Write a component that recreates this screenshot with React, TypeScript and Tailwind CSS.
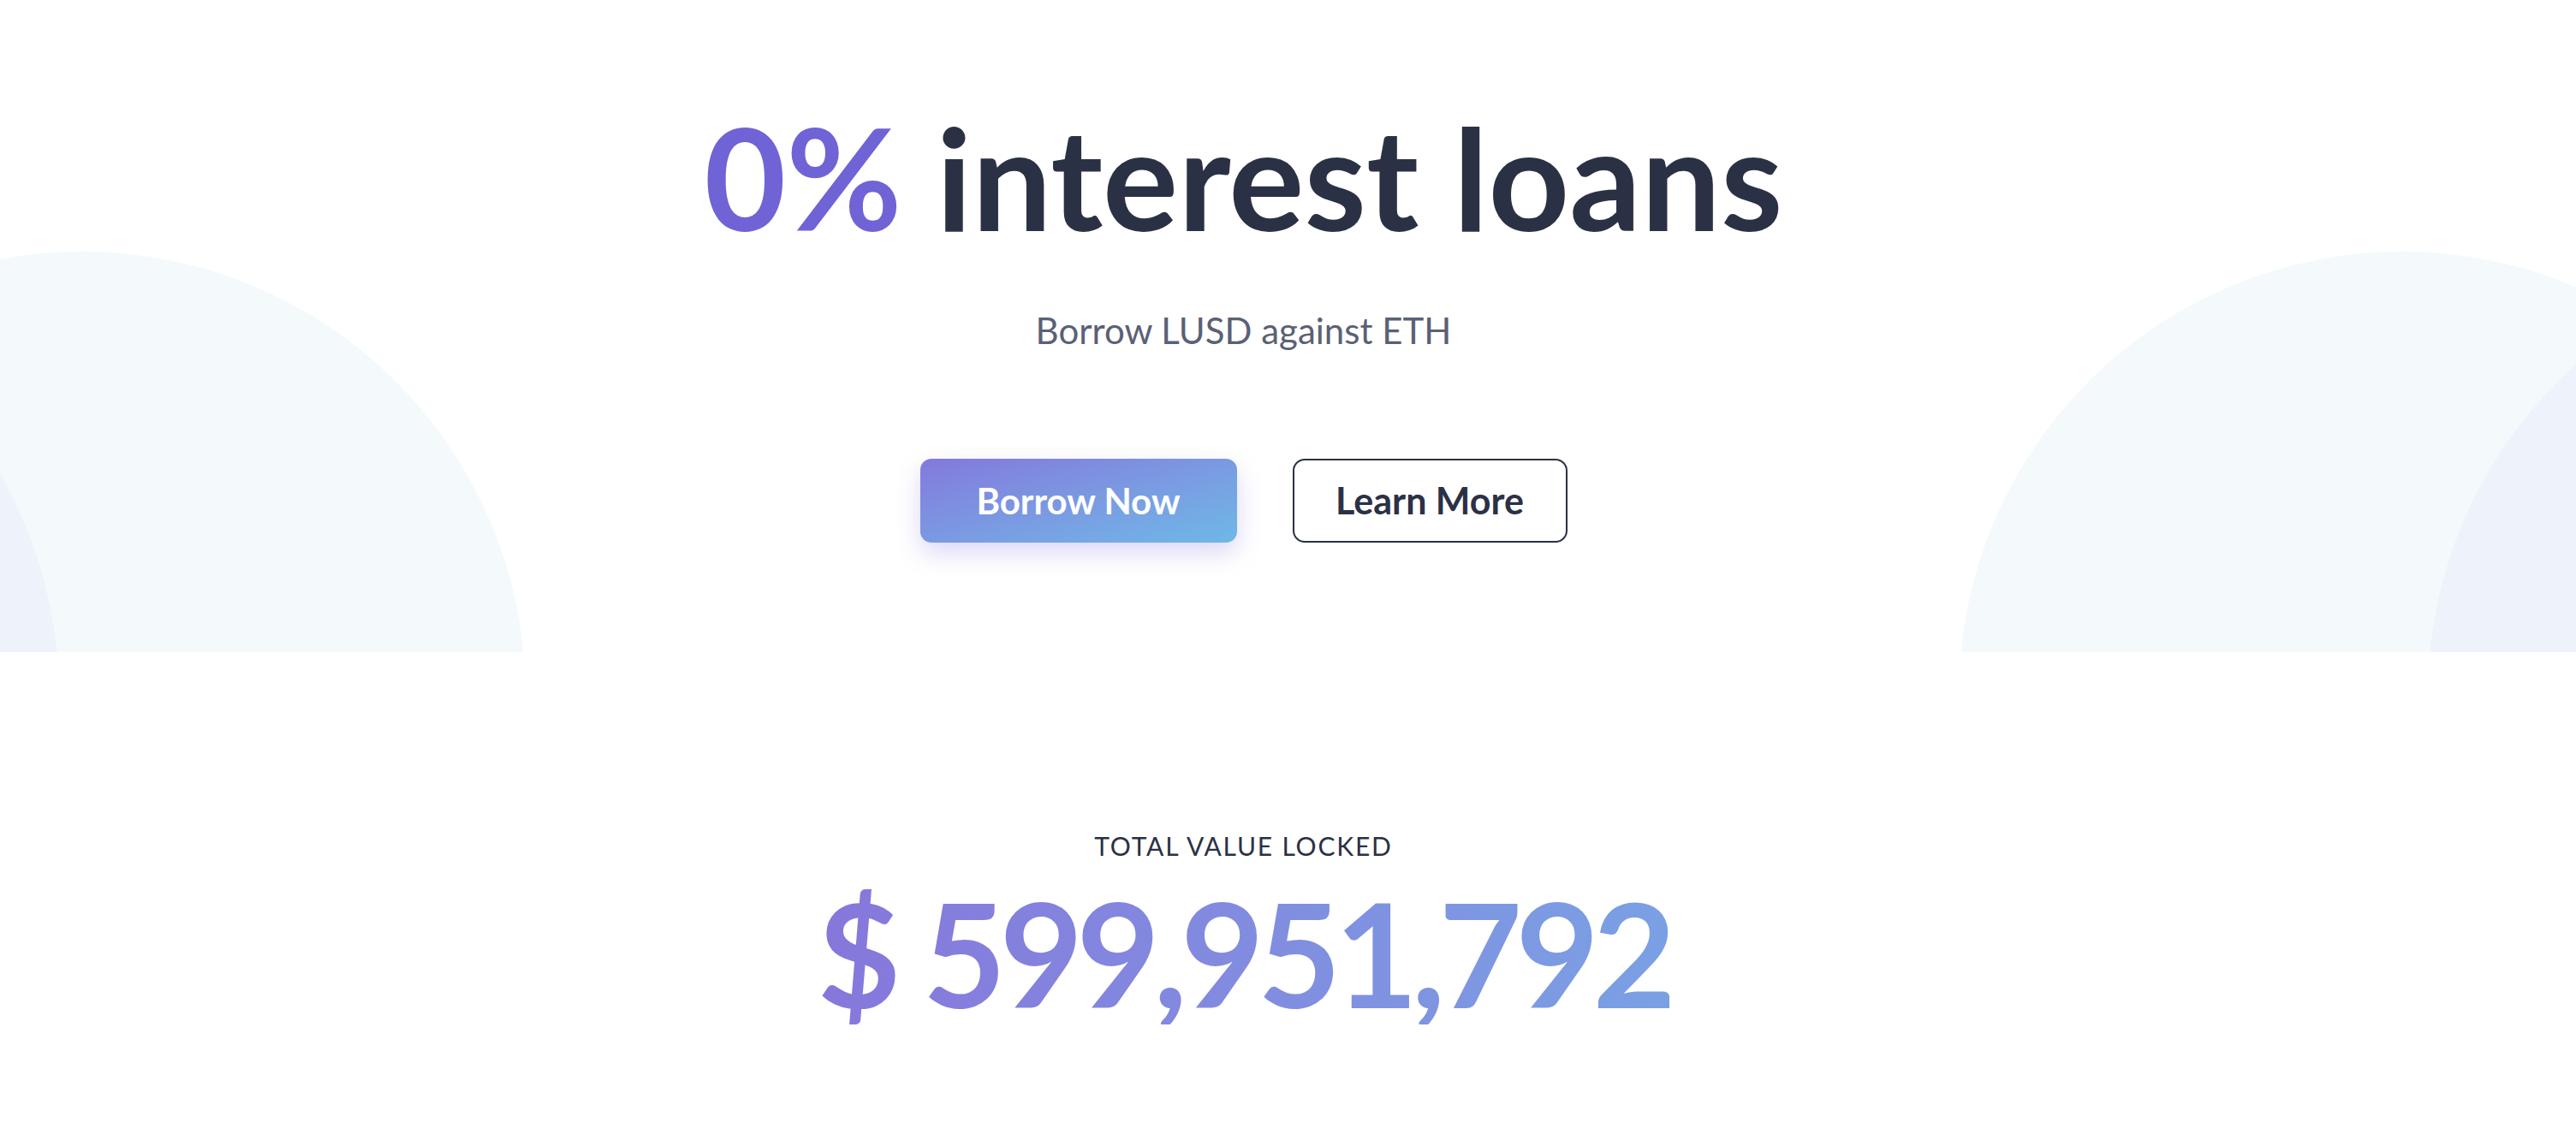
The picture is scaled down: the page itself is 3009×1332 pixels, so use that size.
export default function App() {
  return (
    <div className="min-h-screen bg-white font-['Lato',sans-serif] text-[#2b3145]">
      <section className="relative h-[762px] overflow-hidden">
        {/* background arches */}
        <div className="absolute left-[-422px] top-[294px] h-[1036px] w-[1036px] rounded-full bg-[#f4f9fb]" />
        <div className="absolute left-[-967px] top-[294px] h-[1036px] w-[1036px] rounded-full bg-[#eef2fb]" />
        <div className="absolute left-[2288px] top-[294px] h-[1036px] w-[1036px] rounded-full bg-[#f4f9fb]" />
        <div className="absolute left-[2836px] top-[294px] h-[1036px] w-[1036px] rounded-full bg-[#eef2fb]" />

        <div className="relative flex flex-col items-center pt-[124px] pr-[104px]">
          <h1 className="text-[165px] font-bold leading-none">
            <span className="text-[#6f63d6]">0%</span> interest loans
          </h1>
          <p className="mt-[76px] text-[42px] leading-none text-[#5b6075]">Borrow LUSD against ETH</p>
          <div className="mt-[129px] flex gap-[65px]">
            <button className="flex h-[98px] w-[370px] items-center justify-center rounded-[13px] bg-gradient-to-br from-[#8279dc] to-[#6db8e7] text-[42px] font-bold text-white shadow-[0_12px_28px_rgba(125,115,220,0.28)]">
              Borrow Now
            </button>
            <button className="flex h-[98px] w-[321px] items-center justify-center rounded-[14px] border-2 border-[#2b3145] text-[43px] font-bold text-[#2b3145]">
              Learn More
            </button>
          </div>
        </div>
      </section>

      <section className="flex flex-col items-center pt-[211px] pr-[104px] pb-[120px]">
        <div className="text-[30px] leading-none tracking-[0.06em] text-[#2b3145]">TOTAL VALUE LOCKED</div>
        <div className="mt-[26px] bg-gradient-to-r from-[#8677db] to-[#7aa0e4] bg-clip-text text-[168px] font-bold leading-none tracking-[-0.045em] text-transparent">
          $ 599,951,792
        </div>
      </section>
    </div>
  )
}
